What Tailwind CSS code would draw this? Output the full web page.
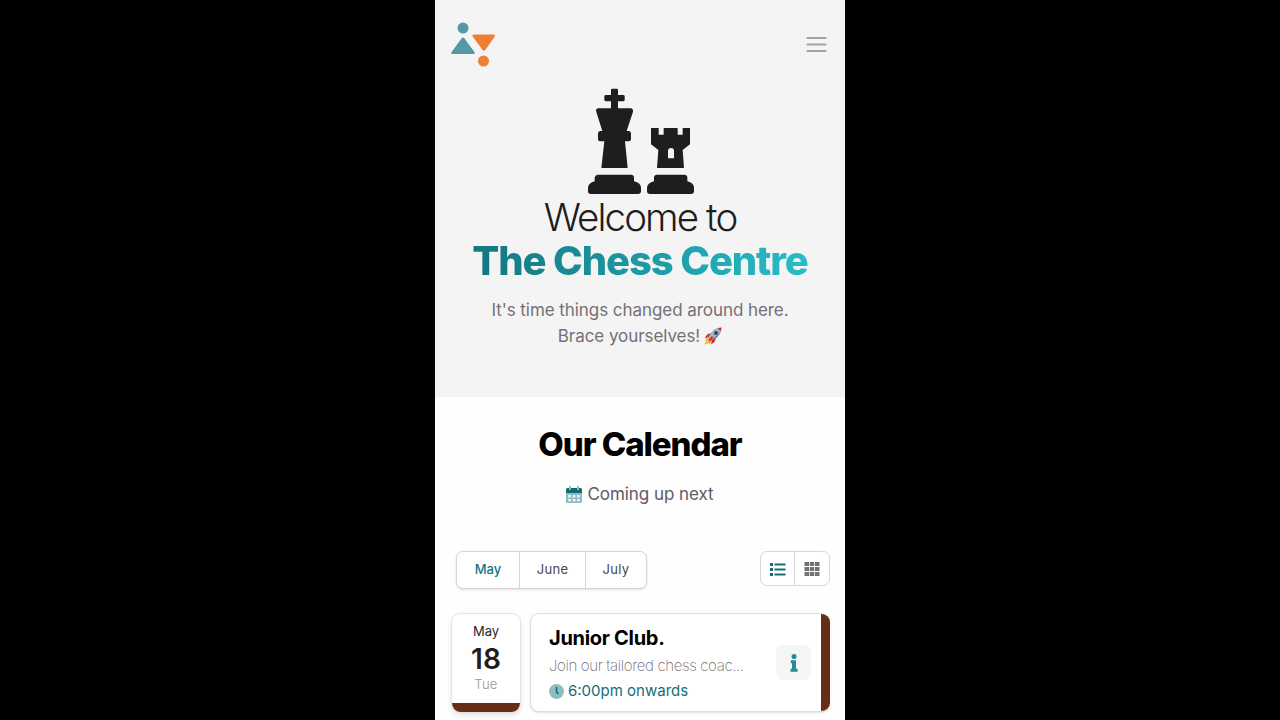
<!DOCTYPE html>
<html lang="en">
<head>
<meta charset="utf-8">
<title>The Chess Centre</title>
<script src="https://cdn.jsdelivr.net/npm/@tailwindcss/browser@4"></script>
</head>
<body class="h-[720px] overflow-hidden bg-black font-['Inter',sans-serif]">
<div class="mx-auto h-[720px] w-[410px] overflow-hidden bg-[#fefefe] whitespace-nowrap">
  <section class="h-[397px] bg-[#f5f4f5]">
    <header class="flex h-[88px] items-center justify-between pl-4 pr-[18px]">
      <svg class="h-[46px] w-[46px]" viewBox="0 0 46 46">
        <g fill="#5599a8"><circle cx="12" cy="7" r="5.5"/><path d="M10.7 17.2Q12 15.8 13.3 17.2L23.6 31.2Q24.200 33 22.600 33H1.400Q-.2 33 .4 31.200Z"/></g>
        <g fill="#ed8035"><path d="M22.600 13.500H42.800Q44.700 13.700 43.800 15.500L34.300 29Q33 30.400 31.600 29L21.700 15.500Q20.700 13.900 22.600 13.500Z"/><circle cx="32.500" cy="40" r="5.500"/></g>
      </svg>
      <svg class="h-5 w-[21px]" viewBox="0 0 21 20" fill="none" stroke="#a3a1a4" stroke-width="2.200" stroke-linecap="round"><path d="M1.500 4h18M1.500 10.500h18M1.500 17h18"/></svg>
    </header>
    <svg class="ml-[153px] h-[107px] w-[107px]" viewBox="54 24 321 321" fill="#1f1d1f">
      <path d="M126 26H140Q144 26 144 30V45H160Q164 45 164 49V60Q164 64 160 64H144V85H182Q190 86 189 95L170 153H177Q183 154 183 160V178Q183 184 176 184H165L173 264H94L103 184H92Q84 184 84 177V160Q84 154 91 153H97L79 96Q76 87 84 85H123V64H108Q103 64 103 59V49Q103 45 108 45H123V30Q123 26 126 26Z"/>
      <path d="M83 284H184Q192 285 192 293V304Q213 309 213 323V335Q212 342 204 342H63Q54 342 54 334V323Q55 309 74 304V293Q75 285 83 284Z"/>
      <path fill-rule="evenodd" d="M243 144H266V164H281V144H323V164H338V144H360V193L338 210L342 264H261L265 210L243 193ZM294 235H312V213Q312 204 303 204Q294 204 294 213Z"/>
      <path d="M260 284H344Q352 285 352 293V304Q372 309 372 323V335Q371 342 363 342H240Q231 342 231 334V323Q232 309 252 304V293Q252 285 260 284Z"/>
    </svg>
    <h1 class="flex flex-col items-center text-[40px] leading-[44px] text-[#1f1d1f]">
      <span class="text-[38.500px] font-light tracking-[-1.900px]">Welcome to</span>
      <span class="bg-linear-to-r from-[#147680] to-[#27bdca] bg-clip-text font-extrabold tracking-[-1.100px] text-transparent">The Chess Centre</span>
    </h1>
    <div class="mt-[14px] flex flex-col items-center text-[17px] leading-[26px] tracking-[-.06px] text-[#737174]">
      <p>It's time things changed around here.</p>
      <p class="flex items-center gap-1"><span>Brace yourselves!</span>
        <svg class="h-[18px] w-[18px]" viewBox="0 0 18 18"><path fill="#f4a72c" d="M5 10L1 13L2.500 13.500L.500 17.500L5 16L5.500 17.500L8 13Z"/><path fill="#ffe26a" d="M5 11.500L2 16L6.500 13Z"/><path fill="#d92d24" d="M7.500 6L3 7.500L.8 11.500L5 10ZM12 11L10.500 15L7 17.500L8 12.500Z"/><path fill="#a4b5bd" d="M17.500.5Q11 .7 7.600 5L4.200 11L7 13.800L13 10.200Q17.500 6 17.500.5Z"/><path fill="#69777f" d="M17 4Q14 9.500 5.800 12.600L7 13.800L13 10.200Q16 7.300 17 4Z"/><path fill="#c93031" d="M17.500.500L13.700 1.200L16.800 4.200Z"/><circle cx="12" cy="6" r="2" fill="#234c6b"/><path d="M8.500 9.500L5 14" stroke="#c72928" stroke-width="1.500"/></svg>
      </p>
    </div>
  </section>
  <section>
    <h2 class="mt-[27px] text-center text-[33px] leading-10 font-extrabold tracking-[-1.050px] text-black">Our Calendar</h2>
    <p class="mt-[17px] flex h-[28px] items-center justify-center gap-[5px] text-[17px] tracking-[-.06px] text-[#5d5b5e]">
      <svg class="h-[18px] w-4" viewBox="0 0 16 18"><path fill="#8fbcc0" d="M0 7H16V15.500Q16 17 14.500 17H1.500Q0 17 0 15.500Z"/><path fill="#146a72" d="M1.500 2H14.500Q16 2 16 3.500V7H0V3.500Q0 2 1.500 2Z"/><path fill="#8fbcc0" d="M3 0H5V4H3ZM11 0H13V4H11Z"/><path fill="#f2fafa" d="M2.200 9H4.800V11.500H2.200ZM6.700 9H9.300V11.500H6.700ZM11.200 9H13.800V11.500H11.200ZM2.200 13H4.800V15.200H2.200ZM6.700 13H9.300V15.200H6.700ZM11.200 13H13.800V15.200H11.200Z"/></svg>
      <span>Coming up next</span>
    </p>
    <div class="mt-[42px] flex items-start justify-between pr-[15px] pl-[21px]">
      <div class="flex h-[38px] w-[191px] divide-x divide-[#d8d6d8] rounded-[7px] border border-[#d8d6d8] bg-white text-[13px] text-[#48464a] shadow-sm">
        <span class="flex w-[63px] items-center justify-center font-medium text-[#147680]">May</span>
        <span class="flex w-[66px] items-center justify-center tracking-[.3px]">June</span>
        <span class="flex flex-1 items-center justify-center tracking-[.3px]">July</span>
      </div>
      <div class="flex h-[35px] w-[70px] divide-x divide-[#d8d6d8] rounded-[7px] border border-[#d8d6d8] bg-white">
        <span class="flex w-[34px] items-center justify-center"><svg class="h-4 w-4" viewBox="0 0 16 16" fill="#146e77"><path d="M0 2h3v3H0zM0 7h3v3H0zM0 12h3v3H0zM4.500 2.500h11v2h-11zM4.500 7.500h11v2h-11zM4.500 12.500h11v2h-11z"/></svg></span>
        <span class="flex w-[34px] items-center justify-center pr-px"><svg class="h-4 w-4" viewBox="0 0 16 16" fill="#737174"><path d="M.500 1h4.500v4H.500zM5.700 1h4.500v4H5.700zM11 1h4.500v4H11zM.500 6h4.500v4H.500zM5.700 6h4.500v4H5.700zM11 6h4.500v4H11zM.500 11h4.500v4H.500zM5.700 11h4.500v4H5.700zM11 11h4.500v4H11z"/></svg></span>
      </div>
    </div>
    <div class="mt-[24px] flex gap-[9px] pl-4">
      <div class="flex h-[99px] w-[70px] flex-col items-center overflow-hidden rounded-[9px] border border-b-0 border-[#e4e2e4] bg-white shadow-md">
        <span class="mt-[8px] text-[13px] leading-[18px] text-[#28262a]">May</span>
        <span class="mt-[3px] text-[28px] leading-8 font-semibold text-[#1f1d1f]">18</span>
        <span class="text-[13px] leading-[18px] font-light tracking-[.3px] text-[#98969a]">Tue</span>
        <span class="mt-auto h-[9px] w-full bg-[#652f16]"></span>
      </div>
      <div class="flex h-[99px] w-[300px] overflow-hidden rounded-[9px] border border-r-0 border-[#e0dee0] bg-white shadow-sm">
        <div class="w-[226px] pl-[18px]">
          <h3 class="mt-[10px] text-[20px] leading-7 font-bold tracking-[-.3px] text-black">Junior Club.</h3>
          <p class="mt-[3px] text-[15px] leading-[22px] font-extralight tracking-[-.36px] text-[#6f6d70]">Join our tailored chess coac...</p>
          <p class="mt-[2px] flex items-center gap-1 text-[15px] leading-6 text-[#146e77]"><svg class="h-[15px] w-[15px]" viewBox="0 0 15 15"><circle cx="7.500" cy="7.500" r="7.500" fill="#8fbcc0"/><path d="M7.500 3V8L9.500 9.800" fill="none" stroke="#146a72" stroke-width="1.600"/></svg><span>6:00pm onwards</span></p>
        </div>
        <div class="mt-[31px] ml-[19px] flex h-[35px] w-[35px] items-center justify-center rounded-lg bg-[#f6f5f6]">
          <svg class="h-[18px] w-2" viewBox="0 0 8 18" fill="#238c97"><circle cx="4" cy="2.500" r="2.500"/><path d="M.800 6.200H6V14.700H7.600V17.700H.500V14.700H2V9.200H.800Z"/></svg>
        </div>
        <span class="ml-auto w-[9px] bg-[#652f16]"></span>
      </div>
    </div>
  </section>
</div>
</body>
</html>
